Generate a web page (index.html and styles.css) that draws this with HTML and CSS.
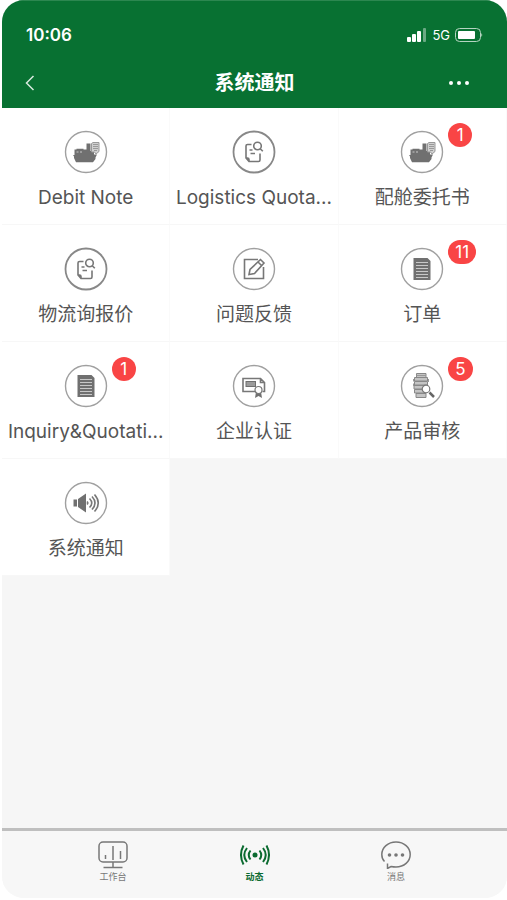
FILE: index.html
```
<!DOCTYPE html>
<html lang="zh-CN">
<head>
  <meta charset="UTF-8">
  <meta name="viewport" content="width=device-width, initial-scale=1.0">
  <title>系统通知</title>
  <link rel="stylesheet" href="styles.css">
</head>
<body>
  <!-- Shared icons -->
  <svg class="sprite" aria-hidden="true">
    <symbol id="ship" viewBox="-22 -22 44 44">
      <circle class="ring" r="20.5"/>
      <path class="fill" d="M-11.500-2.500h2v-.8h7v.8H.500v-6h4v7.500H8v3.500h3l-1.500 3v1.500L7 10.200h-17L-12 6v-1.500l-1-1.500h1.500z"/>
      <path class="doc" d="M5.500-8.500l1.500-1h6v9l-3 2.500-1.500-2h-3z"/>
      <path class="thin" d="M7-7.500h5M7-5.500h5M7-3.500h5M8-1.500h3"/>
      <path class="stripe" d="M-9.500 0h2M-6 0h2"/>
    </symbol>
    <symbol id="search-doc" viewBox="-22 -22 44 44">
      <circle class="ring dark" r="20.500"/>
      <path class="line" d="M-2.500-7.500h-4q-1.500 0-1.500 1.500V6l3 3.500H4.500q1.500 0 1.500-1.500V1.500M-8 6h1.500q1.500 0 1.500 1.500v2M-4.500-2h3M-3.500 1.500h4.500"/>
      <circle class="line" cx="3.500" cy="-6" r="3.800"/>
      <path class="line" d="M6-3.500l2.800 2.800"/>
    </symbol>
    <symbol id="edit" viewBox="-22 -22 44 44">
      <circle class="ring" r="20.500"/>
      <path class="line" d="M4-9.500H-9.500v19H9.500V-2"/>
      <path class="line" d="M-5 5.500l1-5L6.500-9.500l3.500 3.500L.5 4.500zM4-7l3.500 3.500"/>
    </symbol>
    <symbol id="list" viewBox="-22 -22 44 44">
      <circle class="ring" r="20.500"/>
      <path class="fill" d="M-8.500-11H5.500L8.500-8v19h-17z"/>
      <path class="stripe" d="M-6-6.500H6M-6-3.500H6M-6-.5H6M-6 2.500H6M-6 5.500H6M-6 8.500H6"/>
    </symbol>
    <symbol id="cert" viewBox="-22 -22 44 44">
      <circle class="ring" r="20.500"/>
      <path class="line" d="M1 5.500h-12v-13H6.500l4 4v9H8.500M6.500-7v3.500h4"/>
      <path class="fill" d="M-8.500-5H2v6h-10.500z"/>
      <path class="stripe" d="M-7.500-3H1M-7.500-1H1"/>
      <path class="fill" d="M2 6l-1 6 3.500-2 3.500 2-1-6z"/>
      <circle class="knob" cx="4.500" cy="4" r="3.500"/>
    </symbol>
    <symbol id="review" viewBox="-22 -22 44 44">
      <circle class="ring" r="20.500"/>
      <path class="stack" d="M-5.500-12.500H4v4h-9.500zM-7.500-8.500H5.500V-5h-13zM-7.500-4.500H5.500V-1h-13zM-8-.5H4V3h-12zM-7.500 3.500H2V7h-9.500zM-6 7.500H4v4h-10z"/>
      <path class="thin" d="M-5.500-10.500H4M-8.500-7v2.500M-8.500-2.500V0M6.500-7v3"/>
      <circle class="knob" cx="4" cy="3" r="3.800"/>
      <path class="handle" d="M7.500 6.500l4.500 4.500"/>
    </symbol>
    <symbol id="speaker" viewBox="-22 -22 44 44">
      <circle class="ring" r="20.500"/>
      <path class="fill" d="M-12.500-3.500h3.500v7h-3.500zM-8-4L0-9.500v19L-8 4z"/>
      <path class="line" d="M1-1.500q1.500 1.500 0 3M3.500-4.500q4.500 4.500 0 9M6-6.500q6 6.500 0 13M8.500-8.500q7.500 8.500 0 17"/>
    </symbol>
  </svg>

  <div class="phone">
    <header class="header">
      <div class="status">
        <span class="time">10:06</span>
        <div class="status-right">
          <svg class="signal" viewBox="0 0 20 14" aria-hidden="true">
            <rect x="0" y="9" width="4" height="5" rx="1"/>
            <rect x="5" y="6" width="4" height="8" rx="1"/>
            <rect x="10" y="3" width="4" height="11" rx="1"/>
            <rect class="dim" x="16" y="0" width="3" height="14" rx="1"/>
          </svg>
          <span class="network">5G</span>
          <svg class="battery" viewBox="0 0 28 14" aria-hidden="true">
            <rect class="shell" x=".5" y=".5" width="25" height="13" rx="4"/>
            <rect x="3" y="3" width="17" height="8" rx="1"/>
            <path d="M26.500 5q1.500 2 0 4z"/>
          </svg>
        </div>
      </div>
      <div class="nav">
        <button class="nav-btn" type="button" aria-label="返回">
          <svg viewBox="0 0 10 16"><path d="M8.500 1L1.500 8l7 7"/></svg>
        </button>
        <h1>系统通知</h1>
        <button class="nav-btn more" type="button" aria-label="更多">
          <svg viewBox="0 0 20 4"><circle cx="2" cy="2" r="2"/><circle cx="10" cy="2" r="2"/><circle cx="18" cy="2" r="2"/></svg>
        </button>
      </div>
    </header>

    <main class="main">
      <div class="grid">
        <a class="cell" href="#">
          <span class="icon"><svg><use href="#ship"/></svg></span>
          <span class="label">Debit Note</span>
        </a>
        <a class="cell" href="#">
          <span class="icon"><svg><use href="#search-doc"/></svg></span>
          <span class="label">Logistics Quota...</span>
        </a>
        <a class="cell" href="#">
          <span class="icon"><svg><use href="#ship"/></svg><span class="badge">1</span></span>
          <span class="label">配舱委托书</span>
        </a>
        <a class="cell" href="#">
          <span class="icon"><svg><use href="#search-doc"/></svg></span>
          <span class="label">物流询报价</span>
        </a>
        <a class="cell" href="#">
          <span class="icon"><svg><use href="#edit"/></svg></span>
          <span class="label">问题反馈</span>
        </a>
        <a class="cell" href="#">
          <span class="icon"><svg><use href="#list"/></svg><span class="badge">11</span></span>
          <span class="label">订单</span>
        </a>
        <a class="cell" href="#">
          <span class="icon"><svg><use href="#list"/></svg><span class="badge">1</span></span>
          <span class="label">Inquiry&amp;Quotati...</span>
        </a>
        <a class="cell" href="#">
          <span class="icon"><svg><use href="#cert"/></svg></span>
          <span class="label">企业认证</span>
        </a>
        <a class="cell" href="#">
          <span class="icon"><svg><use href="#review"/></svg><span class="badge">5</span></span>
          <span class="label">产品审核</span>
        </a>
        <a class="cell" href="#">
          <span class="icon"><svg><use href="#speaker"/></svg></span>
          <span class="label">系统通知</span>
        </a>
      </div>
    </main>

    <nav class="tabbar">
      <a class="tab" href="#">
        <svg viewBox="0 0 30 28">
          <rect x="1" y="1" width="28" height="20" rx="4"/>
          <path d="M7.500 14v4M15 5v14M22.500 10v8M15 21v5M5.500 26.500h19"/>
        </svg>
        <span>工作台</span>
      </a>
      <a class="tab active" href="#">
        <svg viewBox="0 0 30 28">
          <circle class="dot" cx="15" cy="14" r="2.500"/>
          <path d="M10.500 9.500q-3.500 4.500 0 9M7 7q-5.500 7 0 14M3.500 4.500q-5 9.500 0 19M19.500 9.500q3.500 4.500 0 9M23 7q5.500 7 0 14M26.500 4.500q5 9.500 0 19"/>
        </svg>
        <span>动态</span>
      </a>
      <a class="tab" href="#">
        <svg viewBox="0 0 30 28">
          <path d="M3.500 20.500C1.500 18.500 .800 16 .800 13.500.8 6.500 7 1 15 1s14.200 5.500 14.200 12.500S23 26 15 26q-2.500 0-5-.5l-3.500 2 .0-5"/>
          <circle class="dot" cx="8.500" cy="14" r="1.800"/>
          <circle class="dot" cx="15" cy="14" r="1.800"/>
          <circle class="dot" cx="21.500" cy="14" r="1.800"/>
        </svg>
        <span>消息</span>
      </a>
    </nav>
  </div>
</body>
</html>
```
FILE: styles.css
```
* {
  box-sizing: border-box;
  margin: 0;
  padding: 0;
}

body {
  background-color: #fff;
  font-family: Inter, "Noto Sans CJK SC", sans-serif;
  color: #555;
}

a {
  color: inherit;
  text-decoration: none;
}

.sprite {
  position: absolute;
  width: 0;
  height: 0;
}

.phone {
  display: flex;
  flex-direction: column;
  min-height: calc(100vh - 2px);
  margin: 0 0 2px 2px;
  border-radius: 22px;
  background-color: #f6f6f6;
  overflow: hidden;
}

/* Header */
.header {
  background-color: #087132;
  border-top: 1px solid #2c8750;
  color: #fff;
}

.status {
  display: flex;
  align-items: center;
  justify-content: space-between;
  height: 55px;
  padding: 12px 24px 0;
}

.time {
  font-size: 17px;
  font-weight: 600;
}

.status-right {
  display: flex;
  align-items: center;
  gap: 5px;
}

.status svg {
  height: 14px;
  fill: #fff;
}

.signal {
  width: 20px;
}

.battery {
  width: 28px;
}

.status .dim {
  opacity: 0.4;
}

.battery .shell {
  fill: none;
  stroke: #b5d4c1;
}

.network {
  font-size: 13px;
}

.nav {
  display: grid;
  grid-template-columns: 1fr auto 1fr;
  align-items: center;
  height: 52px;
  padding: 2px 16px 0;
}

.nav h1 {
  font-size: 20px;
  line-height: 28px;
  font-weight: 700;
}

.nav-btn {
  display: flex;
  align-items: center;
  justify-content: center;
  width: 24px;
  height: 32px;
  border: none;
  background: none;
  cursor: pointer;
}

.nav-btn svg {
  width: 10px;
  height: 16px;
  fill: none;
  stroke: #d8eadf;
  stroke-width: 1.5;
}

.nav-btn.more {
  justify-self: end;
  width: 32px;
  margin-right: 16px;
}

.nav-btn.more svg {
  width: 20px;
  height: 4px;
  fill: #fff;
  stroke: none;
}

/* Notification grid */
.main {
  flex: 1;
}

.grid {
  display: grid;
  grid-template-columns: repeat(3, minmax(0, 1fr));
}

.cell {
  display: flex;
  flex-direction: column;
  align-items: center;
  height: 117px;
  padding: 22px 4px 0;
  background-color: #fff;
  border-right: 1px solid #fafafa;
  border-bottom: 1px solid #f7f7f7;
}

.icon {
  position: relative;
  width: 44px;
  height: 44px;
}

.icon svg {
  display: block;
  width: 44px;
  height: 44px;
}

.label {
  max-width: 100%;
  margin-top: 10px;
  font-size: 19px;
  line-height: 28px;
  white-space: nowrap;
  overflow: hidden;
  text-overflow: ellipsis;
}

.badge {
  position: absolute;
  top: -7px;
  left: 48px;
  min-width: 24px;
  height: 24px;
  padding: 0 7px;
  border-radius: 12px;
  background-color: #f94545;
  color: #fff;
  font-size: 17px;
  line-height: 24px;
  text-align: center;
}

.ring {
  fill: none;
  stroke: #a0a0a0;
  stroke-width: 1.4;
}

.ring.dark {
  stroke: #888;
  stroke-width: 1.8;
}

.fill {
  fill: #707070;
}

.line {
  fill: none;
  stroke: #777;
  stroke-width: 1.6;
}

.thin {
  fill: none;
  stroke: #999;
  stroke-width: 1;
}

.doc {
  fill: #d0d0d0;
  stroke: #999;
  stroke-width: 1;
}

.stripe {
  fill: none;
  stroke: #c8c8c8;
  stroke-width: 1;
}

.stack {
  fill: #c4c4c4;
  stroke: #888;
  stroke-width: 1;
}

.knob {
  fill: #fff;
  stroke: #777;
  stroke-width: 1.2;
}

.handle {
  stroke: #666;
  stroke-width: 2.5;
}

/* Bottom tabs */
.tabbar {
  display: flex;
  height: 70px;
  padding: 10px 8% 0;
  border-top: 3px solid #bfbfbf;
  background-color: #f7f7f7;
}

.tab {
  flex: 1;
  display: flex;
  flex-direction: column;
  align-items: center;
  gap: 1px;
  color: #777;
  font-size: 9px;
  line-height: 14px;
}

.tab svg {
  width: 30px;
  height: 28px;
  fill: none;
  stroke: currentColor;
  stroke-width: 1.5;
}

.tab svg .dot {
  fill: currentColor;
  stroke: none;
}

.tab.active {
  color: #0b6b30;
  font-weight: 700;
}

.tab.active svg {
  stroke-width: 2;
}
```
